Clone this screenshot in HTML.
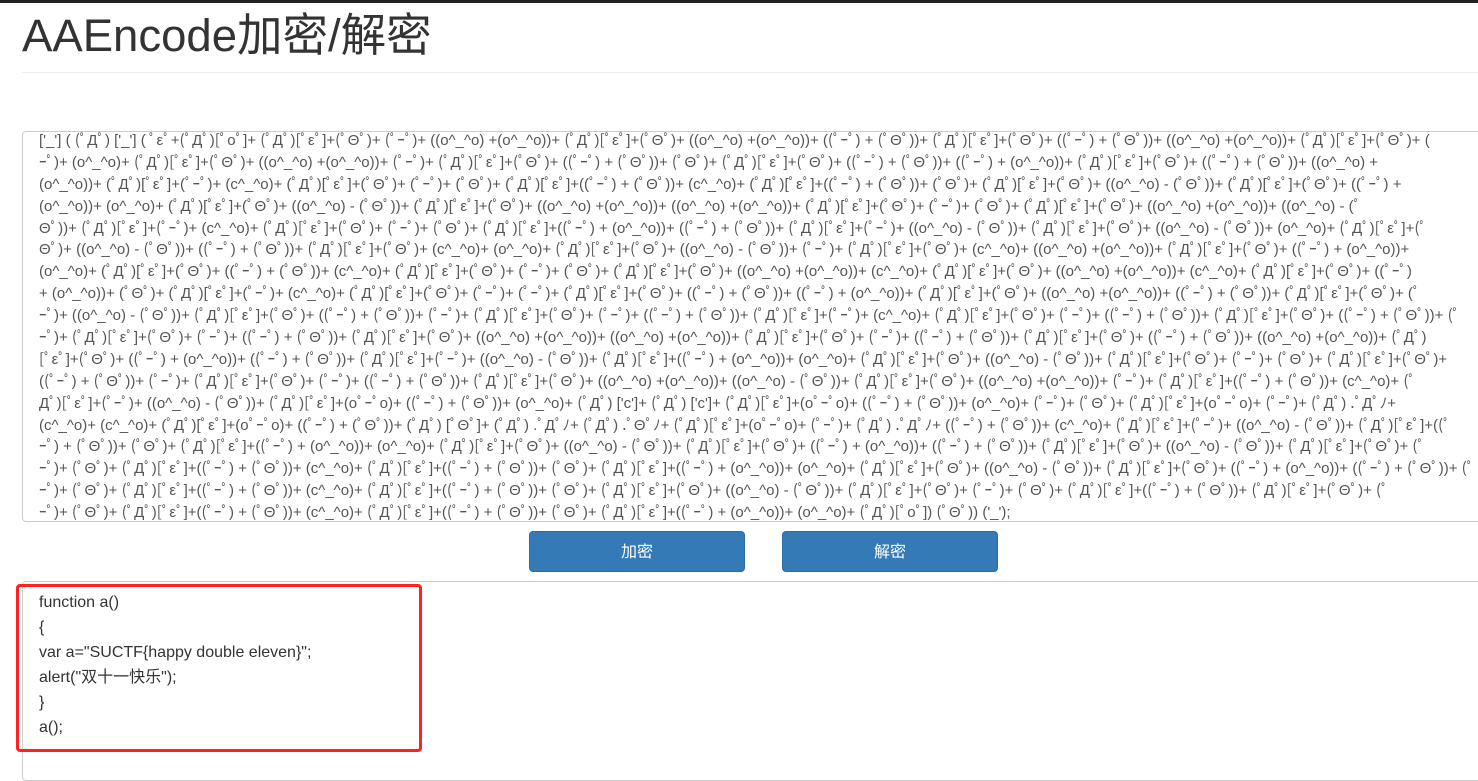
<!DOCTYPE html>
<html><head><meta charset="utf-8">
<style>
body{margin:0;width:1478px;height:767px;overflow:hidden;background:#fff;font-family:"Liberation Sans","Noto Sans CJK SC",sans-serif;position:relative}
.bar{position:absolute;left:0;top:0;width:1478px;height:3px;background:#222}
h1{position:absolute;left:22px;top:9px;margin:0;font-weight:400;font-size:45.5px;color:#333;line-height:54px;font-family:"Liberation Sans","Noto Sans CJK SC",sans-serif}
.hr{position:absolute;left:22px;top:72px;width:1456px;height:1px;background:#eee}
.ta{position:absolute;left:22px;top:131px;width:1470px;height:391px;border:1px solid #ccc;border-radius:4px;overflow:hidden;color:#555;font-size:15px;box-sizing:border-box}
.ta .in{position:absolute;left:16px;top:-2px;width:1440px}
.ta div.l{white-space:nowrap;overflow:hidden;height:21.9px;line-height:21.9px}
.btn{position:absolute;top:531px;width:216px;height:41px;background:#337ab7;border:1px solid #2e6da4;border-radius:4px;color:#fff;font-size:16px;text-align:center;line-height:41px;box-sizing:border-box}
.ta2{position:absolute;left:22px;top:581px;width:1470px;height:200px;border:1px solid #ccc;border-radius:4px;box-sizing:border-box}
.red{position:absolute;left:16px;top:584px;width:406px;height:168px;border:3px solid #f22;border-radius:4px;box-sizing:border-box}
.code{position:absolute;left:39px;top:590px;font-size:16px;color:#333;line-height:25px}
</style></head><body>
<div class="bar"></div>
<h1>AAEncode加密/解密</h1>
<div class="hr"></div>
<div class="ta"><div class="in">
<div class="l">[&#39;_&#39;] ( (ﾟДﾟ) [&#39;_&#39;] ( ﾟεﾟ+(ﾟДﾟ)[ﾟoﾟ]+ (ﾟДﾟ)[ﾟεﾟ]+(ﾟΘﾟ)+ (ﾟｰﾟ)+ ((o^_^o) +(o^_^o))+ (ﾟДﾟ)[ﾟεﾟ]+(ﾟΘﾟ)+ ((o^_^o) +(o^_^o))+ ((ﾟｰﾟ) + (ﾟΘﾟ))+ (ﾟДﾟ)[ﾟεﾟ]+(ﾟΘﾟ)+ ((ﾟｰﾟ) + (ﾟΘﾟ))+ ((o^_^o) +(o^_^o))+ (ﾟДﾟ)[ﾟεﾟ]+(ﾟΘﾟ)+ (</div>
<div class="l">ｰﾟ)+ (o^_^o)+ (ﾟДﾟ)[ﾟεﾟ]+(ﾟΘﾟ)+ ((o^_^o) +(o^_^o))+ (ﾟｰﾟ)+ (ﾟДﾟ)[ﾟεﾟ]+(ﾟΘﾟ)+ ((ﾟｰﾟ) + (ﾟΘﾟ))+ (ﾟΘﾟ)+ (ﾟДﾟ)[ﾟεﾟ]+(ﾟΘﾟ)+ ((ﾟｰﾟ) + (ﾟΘﾟ))+ ((ﾟｰﾟ) + (o^_^o))+ (ﾟДﾟ)[ﾟεﾟ]+(ﾟΘﾟ)+ ((ﾟｰﾟ) + (ﾟΘﾟ))+ ((o^_^o) +</div>
<div class="l">(o^_^o))+ (ﾟДﾟ)[ﾟεﾟ]+(ﾟｰﾟ)+ (c^_^o)+ (ﾟДﾟ)[ﾟεﾟ]+(ﾟΘﾟ)+ (ﾟｰﾟ)+ (ﾟΘﾟ)+ (ﾟДﾟ)[ﾟεﾟ]+((ﾟｰﾟ) + (ﾟΘﾟ))+ (c^_^o)+ (ﾟДﾟ)[ﾟεﾟ]+((ﾟｰﾟ) + (ﾟΘﾟ))+ (ﾟΘﾟ)+ (ﾟДﾟ)[ﾟεﾟ]+(ﾟΘﾟ)+ ((o^_^o) - (ﾟΘﾟ))+ (ﾟДﾟ)[ﾟεﾟ]+(ﾟΘﾟ)+ ((ﾟｰﾟ) +</div>
<div class="l">(o^_^o))+ (o^_^o)+ (ﾟДﾟ)[ﾟεﾟ]+(ﾟΘﾟ)+ ((o^_^o) - (ﾟΘﾟ))+ (ﾟДﾟ)[ﾟεﾟ]+(ﾟΘﾟ)+ ((o^_^o) +(o^_^o))+ ((o^_^o) +(o^_^o))+ (ﾟДﾟ)[ﾟεﾟ]+(ﾟΘﾟ)+ (ﾟｰﾟ)+ (ﾟΘﾟ)+ (ﾟДﾟ)[ﾟεﾟ]+(ﾟΘﾟ)+ ((o^_^o) +(o^_^o))+ ((o^_^o) - (ﾟ</div>
<div class="l">Θﾟ))+ (ﾟДﾟ)[ﾟεﾟ]+(ﾟｰﾟ)+ (c^_^o)+ (ﾟДﾟ)[ﾟεﾟ]+(ﾟΘﾟ)+ (ﾟｰﾟ)+ (ﾟΘﾟ)+ (ﾟДﾟ)[ﾟεﾟ]+((ﾟｰﾟ) + (o^_^o))+ ((ﾟｰﾟ) + (ﾟΘﾟ))+ (ﾟДﾟ)[ﾟεﾟ]+(ﾟｰﾟ)+ ((o^_^o) - (ﾟΘﾟ))+ (ﾟДﾟ)[ﾟεﾟ]+(ﾟΘﾟ)+ ((o^_^o) - (ﾟΘﾟ))+ (o^_^o)+ (ﾟДﾟ)[ﾟεﾟ]+(ﾟ</div>
<div class="l">Θﾟ)+ ((o^_^o) - (ﾟΘﾟ))+ ((ﾟｰﾟ) + (ﾟΘﾟ))+ (ﾟДﾟ)[ﾟεﾟ]+(ﾟΘﾟ)+ (c^_^o)+ (o^_^o)+ (ﾟДﾟ)[ﾟεﾟ]+(ﾟΘﾟ)+ ((o^_^o) - (ﾟΘﾟ))+ (ﾟｰﾟ)+ (ﾟДﾟ)[ﾟεﾟ]+(ﾟΘﾟ)+ (c^_^o)+ ((o^_^o) +(o^_^o))+ (ﾟДﾟ)[ﾟεﾟ]+(ﾟΘﾟ)+ ((ﾟｰﾟ) + (o^_^o))+</div>
<div class="l">(o^_^o)+ (ﾟДﾟ)[ﾟεﾟ]+(ﾟΘﾟ)+ ((ﾟｰﾟ) + (ﾟΘﾟ))+ (c^_^o)+ (ﾟДﾟ)[ﾟεﾟ]+(ﾟΘﾟ)+ (ﾟｰﾟ)+ (ﾟΘﾟ)+ (ﾟДﾟ)[ﾟεﾟ]+(ﾟΘﾟ)+ ((o^_^o) +(o^_^o))+ (c^_^o)+ (ﾟДﾟ)[ﾟεﾟ]+(ﾟΘﾟ)+ ((o^_^o) +(o^_^o))+ (c^_^o)+ (ﾟДﾟ)[ﾟεﾟ]+(ﾟΘﾟ)+ ((ﾟｰﾟ)</div>
<div class="l">+ (o^_^o))+ (ﾟΘﾟ)+ (ﾟДﾟ)[ﾟεﾟ]+(ﾟｰﾟ)+ (c^_^o)+ (ﾟДﾟ)[ﾟεﾟ]+(ﾟΘﾟ)+ (ﾟｰﾟ)+ (ﾟｰﾟ)+ (ﾟДﾟ)[ﾟεﾟ]+(ﾟΘﾟ)+ ((ﾟｰﾟ) + (ﾟΘﾟ))+ ((ﾟｰﾟ) + (o^_^o))+ (ﾟДﾟ)[ﾟεﾟ]+(ﾟΘﾟ)+ ((o^_^o) +(o^_^o))+ ((ﾟｰﾟ) + (ﾟΘﾟ))+ (ﾟДﾟ)[ﾟεﾟ]+(ﾟΘﾟ)+ (ﾟ</div>
<div class="l">ｰﾟ)+ ((o^_^o) - (ﾟΘﾟ))+ (ﾟДﾟ)[ﾟεﾟ]+(ﾟΘﾟ)+ ((ﾟｰﾟ) + (ﾟΘﾟ))+ (ﾟｰﾟ)+ (ﾟДﾟ)[ﾟεﾟ]+(ﾟΘﾟ)+ (ﾟｰﾟ)+ ((ﾟｰﾟ) + (ﾟΘﾟ))+ (ﾟДﾟ)[ﾟεﾟ]+(ﾟｰﾟ)+ (c^_^o)+ (ﾟДﾟ)[ﾟεﾟ]+(ﾟΘﾟ)+ (ﾟｰﾟ)+ ((ﾟｰﾟ) + (ﾟΘﾟ))+ (ﾟДﾟ)[ﾟεﾟ]+(ﾟΘﾟ)+ ((ﾟｰﾟ) + (ﾟΘﾟ))+ (ﾟ</div>
<div class="l">ｰﾟ)+ (ﾟДﾟ)[ﾟεﾟ]+(ﾟΘﾟ)+ (ﾟｰﾟ)+ ((ﾟｰﾟ) + (ﾟΘﾟ))+ (ﾟДﾟ)[ﾟεﾟ]+(ﾟΘﾟ)+ ((o^_^o) +(o^_^o))+ ((o^_^o) +(o^_^o))+ (ﾟДﾟ)[ﾟεﾟ]+(ﾟΘﾟ)+ (ﾟｰﾟ)+ ((ﾟｰﾟ) + (ﾟΘﾟ))+ (ﾟДﾟ)[ﾟεﾟ]+(ﾟΘﾟ)+ ((ﾟｰﾟ) + (ﾟΘﾟ))+ ((o^_^o) +(o^_^o))+ (ﾟДﾟ)</div>
<div class="l">[ﾟεﾟ]+(ﾟΘﾟ)+ ((ﾟｰﾟ) + (o^_^o))+ ((ﾟｰﾟ) + (ﾟΘﾟ))+ (ﾟДﾟ)[ﾟεﾟ]+(ﾟｰﾟ)+ ((o^_^o) - (ﾟΘﾟ))+ (ﾟДﾟ)[ﾟεﾟ]+((ﾟｰﾟ) + (o^_^o))+ (o^_^o)+ (ﾟДﾟ)[ﾟεﾟ]+(ﾟΘﾟ)+ ((o^_^o) - (ﾟΘﾟ))+ (ﾟДﾟ)[ﾟεﾟ]+(ﾟΘﾟ)+ (ﾟｰﾟ)+ (ﾟΘﾟ)+ (ﾟДﾟ)[ﾟεﾟ]+(ﾟΘﾟ)+</div>
<div class="l">((ﾟｰﾟ) + (ﾟΘﾟ))+ (ﾟｰﾟ)+ (ﾟДﾟ)[ﾟεﾟ]+(ﾟΘﾟ)+ (ﾟｰﾟ)+ ((ﾟｰﾟ) + (ﾟΘﾟ))+ (ﾟДﾟ)[ﾟεﾟ]+(ﾟΘﾟ)+ ((o^_^o) +(o^_^o))+ ((o^_^o) - (ﾟΘﾟ))+ (ﾟДﾟ)[ﾟεﾟ]+(ﾟΘﾟ)+ ((o^_^o) +(o^_^o))+ (ﾟｰﾟ)+ (ﾟДﾟ)[ﾟεﾟ]+((ﾟｰﾟ) + (ﾟΘﾟ))+ (c^_^o)+ (ﾟ</div>
<div class="l">Дﾟ)[ﾟεﾟ]+(ﾟｰﾟ)+ ((o^_^o) - (ﾟΘﾟ))+ (ﾟДﾟ)[ﾟεﾟ]+(oﾟｰﾟo)+ ((ﾟｰﾟ) + (ﾟΘﾟ))+ (o^_^o)+ (ﾟДﾟ) [&#39;c&#39;]+ (ﾟДﾟ) [&#39;c&#39;]+ (ﾟДﾟ)[ﾟεﾟ]+(oﾟｰﾟo)+ ((ﾟｰﾟ) + (ﾟΘﾟ))+ (o^_^o)+ (ﾟｰﾟ)+ (ﾟΘﾟ)+ (ﾟДﾟ)[ﾟεﾟ]+(oﾟｰﾟo)+ (ﾟｰﾟ)+ (ﾟДﾟ) .ﾟДﾟﾉ+</div>
<div class="l">(c^_^o)+ (c^_^o)+ (ﾟДﾟ)[ﾟεﾟ]+(oﾟｰﾟo)+ ((ﾟｰﾟ) + (ﾟΘﾟ))+ (ﾟДﾟ) [ﾟΘﾟ]+ (ﾟДﾟ) .ﾟДﾟﾉ+ (ﾟДﾟ) .ﾟΘﾟﾉ+ (ﾟДﾟ)[ﾟεﾟ]+(oﾟｰﾟo)+ (ﾟｰﾟ)+ (ﾟДﾟ) .ﾟДﾟﾉ+ ((ﾟｰﾟ) + (ﾟΘﾟ))+ (c^_^o)+ (ﾟДﾟ)[ﾟεﾟ]+(ﾟｰﾟ)+ ((o^_^o) - (ﾟΘﾟ))+ (ﾟДﾟ)[ﾟεﾟ]+((ﾟ</div>
<div class="l">ｰﾟ) + (ﾟΘﾟ))+ (ﾟΘﾟ)+ (ﾟДﾟ)[ﾟεﾟ]+((ﾟｰﾟ) + (o^_^o))+ (o^_^o)+ (ﾟДﾟ)[ﾟεﾟ]+(ﾟΘﾟ)+ ((o^_^o) - (ﾟΘﾟ))+ (ﾟДﾟ)[ﾟεﾟ]+(ﾟΘﾟ)+ ((ﾟｰﾟ) + (o^_^o))+ ((ﾟｰﾟ) + (ﾟΘﾟ))+ (ﾟДﾟ)[ﾟεﾟ]+(ﾟΘﾟ)+ ((o^_^o) - (ﾟΘﾟ))+ (ﾟДﾟ)[ﾟεﾟ]+(ﾟΘﾟ)+ (ﾟ</div>
<div class="l">ｰﾟ)+ (ﾟΘﾟ)+ (ﾟДﾟ)[ﾟεﾟ]+((ﾟｰﾟ) + (ﾟΘﾟ))+ (c^_^o)+ (ﾟДﾟ)[ﾟεﾟ]+((ﾟｰﾟ) + (ﾟΘﾟ))+ (ﾟΘﾟ)+ (ﾟДﾟ)[ﾟεﾟ]+((ﾟｰﾟ) + (o^_^o))+ (o^_^o)+ (ﾟДﾟ)[ﾟεﾟ]+(ﾟΘﾟ)+ ((o^_^o) - (ﾟΘﾟ))+ (ﾟДﾟ)[ﾟεﾟ]+(ﾟΘﾟ)+ ((ﾟｰﾟ) + (o^_^o))+ ((ﾟｰﾟ) + (ﾟΘﾟ))+ (ﾟ</div>
<div class="l">ｰﾟ)+ (ﾟΘﾟ)+ (ﾟДﾟ)[ﾟεﾟ]+((ﾟｰﾟ) + (ﾟΘﾟ))+ (c^_^o)+ (ﾟДﾟ)[ﾟεﾟ]+((ﾟｰﾟ) + (ﾟΘﾟ))+ (ﾟΘﾟ)+ (ﾟДﾟ)[ﾟεﾟ]+(ﾟΘﾟ)+ ((o^_^o) - (ﾟΘﾟ))+ (ﾟДﾟ)[ﾟεﾟ]+(ﾟΘﾟ)+ (ﾟｰﾟ)+ (ﾟΘﾟ)+ (ﾟДﾟ)[ﾟεﾟ]+((ﾟｰﾟ) + (ﾟΘﾟ))+ (ﾟДﾟ)[ﾟεﾟ]+(ﾟΘﾟ)+ (ﾟ</div>
<div class="l">ｰﾟ)+ (ﾟΘﾟ)+ (ﾟДﾟ)[ﾟεﾟ]+((ﾟｰﾟ) + (ﾟΘﾟ))+ (c^_^o)+ (ﾟДﾟ)[ﾟεﾟ]+((ﾟｰﾟ) + (ﾟΘﾟ))+ (ﾟΘﾟ)+ (ﾟДﾟ)[ﾟεﾟ]+((ﾟｰﾟ) + (o^_^o))+ (o^_^o)+ (ﾟДﾟ)[ﾟoﾟ]) (ﾟΘﾟ)) (&#39;_&#39;);</div>
</div></div>
<div class="btn" style="left:529px">加密</div>
<div class="btn" style="left:782px">解密</div>
<div class="ta2"></div>
<div class="red"></div>
<div class="code">function a()<br>{<br>var a="SUCTF{happy double eleven}";<br>alert("双十一快乐");<br>}<br>a();</div>
</body></html>
